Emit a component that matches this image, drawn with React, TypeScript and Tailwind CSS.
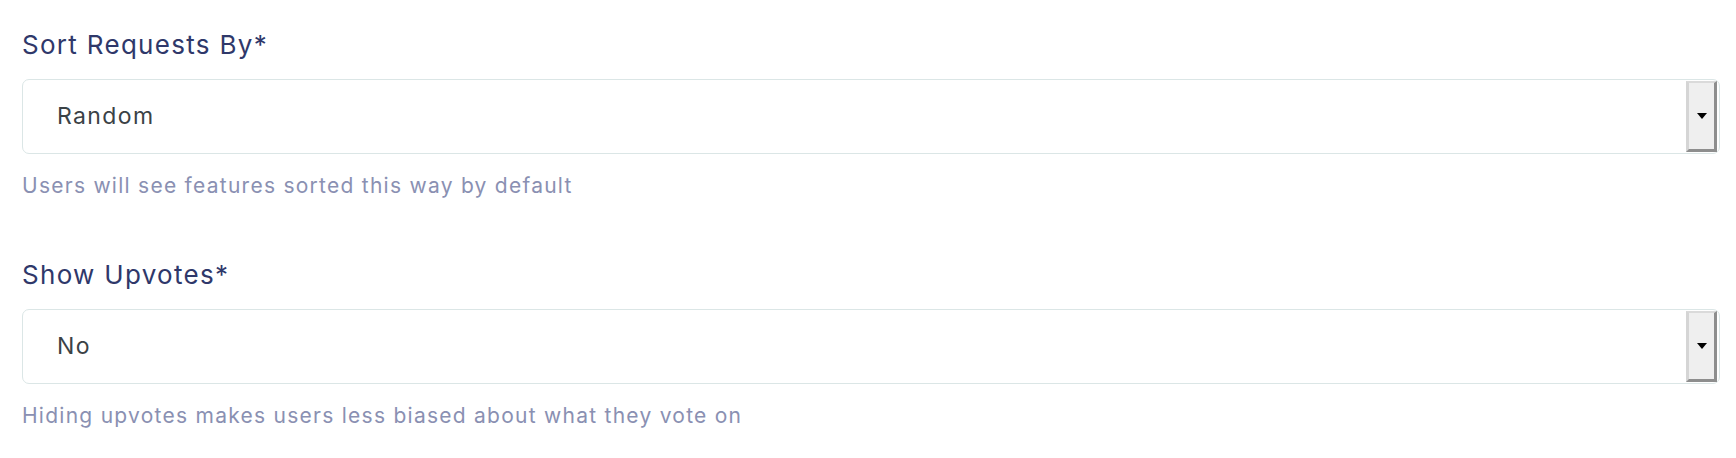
const font = { fontFamily: 'Inter, "Noto Sans", sans-serif' }

type FieldProps = {
  label: string
  value: string
  help: string
}

function NativeSelect({ value }: { value: string }) {
  return (
    <div className="mt-[20px] flex h-[75px] items-stretch rounded-[7px] border border-[#dbe6e6] bg-white">
      <div className="flex flex-1 items-center pl-[34px] text-[23px] tracking-[0.06em] text-[#3b4246]">{value}</div>
      <div className="mt-[1px] mb-[1px] mr-[2px] flex w-[31px] items-center justify-center border-t-2 border-l-[3px] border-r-[3px] border-b-[3px] border-t-[#dadada] border-l-[#d5d5d5] border-r-[#8e8e8e] border-b-[#8e8e8e] bg-[#efefef]">
        <div className="h-0 w-0 border-x-[5px] border-t-[6px] border-x-transparent border-t-black" />
      </div>
    </div>
  )
}

function Field({ label, value, help }: FieldProps) {
  return (
    <div>
      <div className="text-[26px] leading-[28px] tracking-[0.05em] text-[#2f386a]">{label}</div>
      <NativeSelect value={value} />
      <div className="mt-[20px] text-[21px] leading-[24px] tracking-[0.06em] text-[#8a90b2]">{help}</div>
    </div>
  )
}

export default function App() {
  return (
    <div className="min-h-screen bg-white pl-[22px] pr-[16px] pt-[31px]" style={font}>
      <Field
        label="Sort Requests By*"
        value="Random"
        help="Users will see features sorted this way by default"
      />
      <div className="mt-[63px]">
        <Field
          label="Show Upvotes*"
          value="No"
          help="Hiding upvotes makes users less biased about what they vote on"
        />
      </div>
    </div>
  )
}
